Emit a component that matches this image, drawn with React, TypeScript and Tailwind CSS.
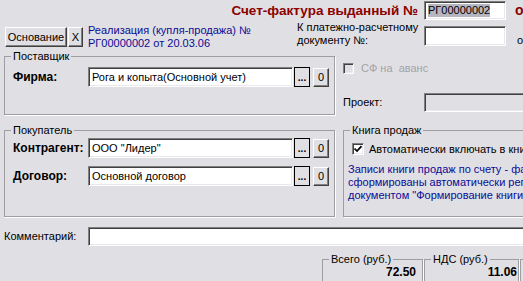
const sunken =
  'border border-t-[#808080] border-l-[#808080] border-b-white border-r-white shadow-[inset_1px_1px_0_#404040,inset_-1px_-1px_0_#e9e8ec]';
const raised =
  'border border-t-white border-l-white border-b-[#404040] border-r-[#404040] shadow-[inset_-1px_-1px_0_#808080]';

function Field({ value, w, disabled }: { value?: string; w: string; disabled?: boolean }) {
  return (
    <div className={`${sunken} ${w} shrink-0 h-full flex items-center pl-[3px] whitespace-nowrap overflow-hidden ${disabled ? 'bg-[#e0dfe3]' : 'bg-white'}`}>
      {value}
    </div>
  );
}

function Picker({ label, value }: { label: string; value: string }) {
  return (
    <div className="flex items-center h-[20px]">
      <div className="w-[83px] shrink-0 pl-[8px] font-bold text-[12px] whitespace-nowrap">{label}</div>
      <Field value={value} w="w-[205px]" />
      <button className="ml-[1px] shrink-0 h-[20px] w-[16px] border border-black bg-[#e0dfe3] flex items-end justify-center pb-[3px] leading-none font-bold text-[10px]">
        ...
      </button>
      <button className={`${raised} ml-[3px] shrink-0 h-[19px] w-[16px] bg-[#e0dfe3] flex items-center justify-center`}>0</button>
    </div>
  );
}

function Group({ title, className, children }: { title?: string; className: string; children?: React.ReactNode }) {
  return (
    <fieldset className={`border border-[#9e9da2] shadow-[1px_1px_0_white] shrink-0 ${className}`}>
      {title && <legend className="ml-[6px] px-[2px] leading-[13px]">{title}</legend>}
      {children}
    </fieldset>
  );
}

export default function App() {
  return (
    <div className="w-[523px] h-[281px] overflow-hidden bg-[#e0dfe3] text-black text-[11px] leading-[13px] font-['Liberation_Sans',Arial,sans-serif] flex flex-col">
      <div className="h-[21px] flex items-center shrink-0">
        <div className="w-[420px] shrink-0 pr-[2px] text-right font-bold text-[13.5px] text-[#8c0000] whitespace-nowrap">
          Счет-фактура выданный №
        </div>
        <div className={`${sunken} ml-[4px] shrink-0 w-[82px] h-[19px] bg-white flex items-center pl-[3px]`}>
          <span className="bg-[#b6b5c0]">РГ00000002</span>
        </div>
        <span className="ml-[9px] font-bold text-[14px] text-[#8c0000]">о</span>
      </div>

      <div className="h-[29px] flex items-start shrink-0 whitespace-nowrap">
        <button className={`${raised} ml-[5px] mt-[6px] shrink-0 h-[20px] w-[62px] bg-[#e0dfe3]`}>Основание</button>
        <button className={`${raised} ml-[1px] mt-[6px] shrink-0 h-[20px] w-[15px] bg-[#e0dfe3]`}>X</button>
        <div className="ml-[5px] mt-[3px] w-[209px] shrink-0 text-[#0b0b96]">
          <div>Реализация (купля-продажа) №</div>
          <div>РГ00000002 от 20.03.06</div>
        </div>
        <div className="w-[127px] shrink-0">
          <div>К платежно-расчетному</div>
          <div>документу №:</div>
        </div>
        <div className="mt-[5px] h-[20px] shrink-0">
          <Field w="w-[82px]" />
        </div>
        <span className="ml-[11px] mt-[13px]">о</span>
      </div>

      <div className="h-[167px] flex shrink-0">
        <div className="ml-[4px] w-[331px] shrink-0 flex flex-col">
          <Group title="Поставщик" className="h-[65px]">
            <div className="pt-[4px]">
              <Picker label="Фирма:" value="Рога и копыта(Основной учет)" />
            </div>
          </Group>
          <Group title="Покупатель" className="mt-[9px] h-[93px]">
            <div className="pt-[1px] flex flex-col gap-[8px]">
              <Picker label="Контрагент:" value={'ООО "Лидер"'} />
              <Picker label="Договор:" value="Основной договор" />
            </div>
          </Group>
        </div>

        <div className="ml-[8px] w-[200px] shrink-0 flex flex-col">
          <div className="mt-[13px] h-[11px] flex items-center whitespace-nowrap">
            <div className={`${sunken} w-[11px] h-[11px] bg-[#e0dfe3]`} />
            <span className="ml-[7px] text-[#a3a2a7]">СФ на&nbsp; аванс</span>
          </div>
          <div className="mt-[19px] h-[19px] flex items-center">
            <div className="w-[81px] shrink-0">Проект:</div>
            <Field w="w-[110px]" disabled />
          </div>
          <Group title="Книга продаж" className="mt-[12px] h-[93px] w-[200px]">
            <div className="pt-[6px] pl-[8px] h-[18px] flex items-center whitespace-nowrap">
              <div className={`${sunken} w-[12px] h-[12px] bg-white flex items-center justify-center`}>
                <svg width="8" height="8" viewBox="0 0 8 8">
                  <path d="M0.5 3.5 L3 6 L7.5 1.2" stroke="black" strokeWidth="1.7" fill="none" />
                </svg>
              </div>
              <span className="ml-[5px]">Автоматически включать в книгу продаж</span>
            </div>
            <div className="mt-[8px] pl-[4px] text-[#0b0b96] whitespace-nowrap">
              <div>Записи книги продаж по счету - фактуре будут</div>
              <div>сформированы автоматически регламентным</div>
              <div>документом "Формирование книги продаж"</div>
            </div>
          </Group>
        </div>
      </div>

      <div className="mt-[10px] h-[19px] flex items-center shrink-0">
        <div className="w-[88px] shrink-0 pl-[4px]">Комментарий:</div>
        <Field w="w-[440px]" />
      </div>

      <div className="mt-[7px] flex shrink-0">
        <Group title="Всего (руб.)" className="ml-[322px] w-[101px] h-[40px]">
          <div className="text-right pr-[6px] font-bold text-[12px]">72.50</div>
        </Group>
        <Group title="НДС (руб.)" className="ml-[1px] w-[95px] h-[40px]">
          <div className="text-right pr-[1px] font-bold text-[12px]">11.06</div>
        </Group>
        <div className="ml-[1px] mt-[6px] w-[40px] h-[40px] shrink-0 border-l border-t border-[#9e9da2]" />
      </div>
    </div>
  );
}
